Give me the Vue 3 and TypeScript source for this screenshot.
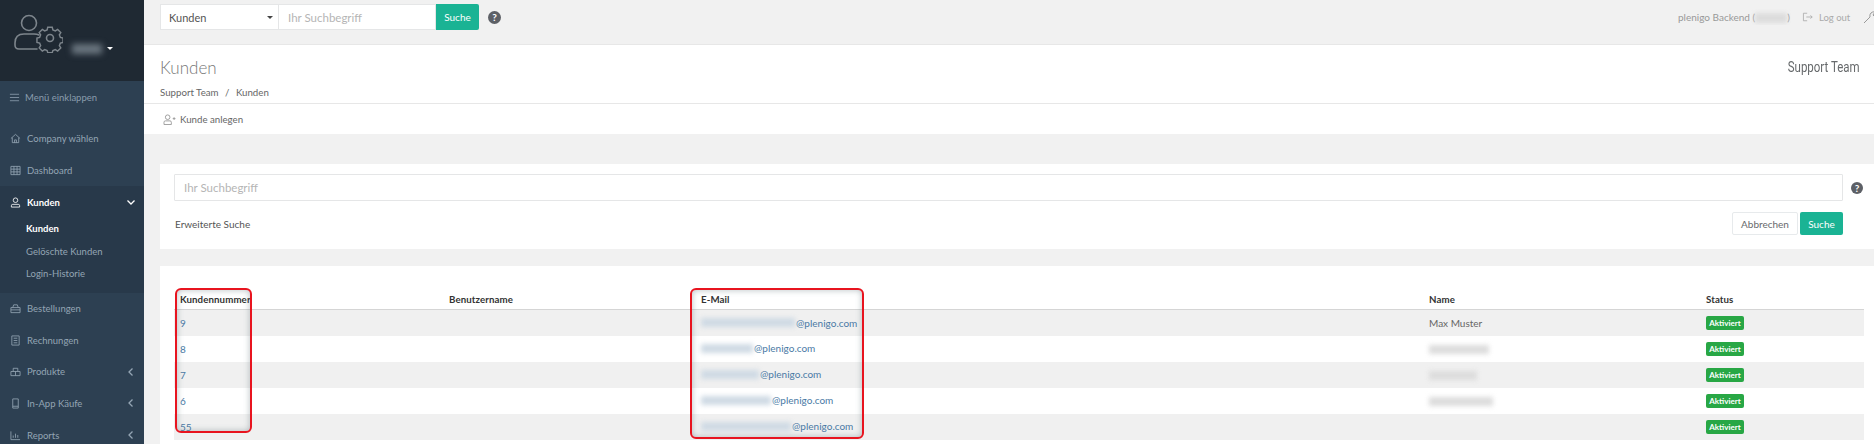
<template>
  <div class="page">
    <aside class="sidebar">
      <div class="profile">
        <svg class="avatar" viewBox="0 0 50 40" fill="none" stroke="#7d858c" stroke-width="1.6">
          <circle cx="16" cy="10" r="7.5" />
          <path d="M24 36H6q-4 0-4-4v-2q0-9 9-9h10q3 0 5 1" stroke-linecap="round" />
          <circle cx="37" cy="25" r="3.5" />
          <path d="M34.500 13h5l.7 3 2.700 1.100 2.600-1.600 3.500 3.500-1.600 2.600 1.100 2.700 3 .7v5l-3 .7-1.100 2.700 1.600 2.600-3.500 3.500-2.600-1.600-2.700 1.100-.7 2.300h-5l-.7-2.300-2.700-1.100-2.600 1.600-3.500-3.500 1.600-2.600-1.100-2.700-3-.7v-5l3-.7 1.100-2.700-1.600-2.600 3.500-3.500 2.600 1.600 2.700-1.100z" transform="translate(3.700 2.500) scale(.9)" />
        </svg>
        <span class="profile-name"></span>
        <span class="caret-white"></span>
      </div>

      <div class="collapse-row">
        <svg class="nav-icon" viewBox="0 0 12 12" stroke="currentColor" fill="none"><path d="M1 2.500h10M1 6h10M1 9.500h10" /></svg>
        <span>Menü einklappen</span>
      </div>

      <nav class="nav">
        <template v-for="item in navItems" :key="item.label">
          <div class="nav-item" :class="{ active: item.active }">
            <svg class="nav-icon" viewBox="0 0 12 12" stroke="currentColor" fill="none" v-html="item.icon"></svg>
            <span class="nav-label">{{ item.label }}</span>
            <svg v-if="item.arrow" class="nav-arrow" viewBox="0 0 10 10" stroke="currentColor" fill="none" stroke-width="1.300">
              <path :d="item.arrow === 'down' ? 'M1.500 3.500 5 7l3.500-3.500' : 'M6.500 1.500 3 5l3.500 3.500'" />
            </svg>
          </div>
          <div v-if="item.active" class="subnav">
            <div v-for="(sub, i) in subItems" :key="sub" class="subnav-item" :class="{ current: i === 0 }">{{ sub }}</div>
          </div>
        </template>
      </nav>
    </aside>

    <main class="main">
      <header class="topbar">
        <div class="quick-search">
          <div class="qs-select"><span>Kunden</span><i class="caret-dark"></i></div>
          <div class="qs-input">Ihr Suchbegriff</div>
          <button class="btn-teal qs-btn">Suche</button>
        </div>
        <span class="help">?</span>
        <div class="top-right">
          <span class="backend">plenigo Backend (<i class="blur-light"></i>)</span>
          <span class="logout">
            <svg viewBox="0 0 14 12" width="12" height="10" fill="none" stroke="currentColor"><path d="M6 1.500H1.500v9H6M5 6h7M10 4l2 2-2 2" /></svg>
            Log out
          </span>
          <svg class="wrench" viewBox="0 0 16 16" width="16" height="16" fill="none" stroke="#999"><path d="M2 14l6-6a4 4 0 0 1 5-5l-2 3 2 2 3-2" /></svg>
        </div>
      </header>

      <section class="title-block">
        <div>
          <h1>Kunden</h1>
          <div class="crumbs">Support Team <em>/</em> Kunden</div>
        </div>
        <div class="team">Support Team</div>
      </section>

      <section class="actions">
        <svg viewBox="0 0 14 12" width="13" height="11" fill="none" stroke="#999"><circle cx="5" cy="3.500" r="2.500" /><path d="M1 11.500V9q0-1.500 1.500-1.500h5Q9 7.500 9 9v2.500zM10.500 5h3M12 3.500v3" /></svg>
        <span>Kunde anlegen</span>
      </section>

      <section class="card search-card">
        <div class="search-row">
          <div class="search-input">Ihr Suchbegriff</div>
          <span class="help small">?</span>
        </div>
        <div class="search-foot">
          <span>Erweiterte Suche</span>
          <div class="search-buttons">
            <button class="btn-plain">Abbrechen</button>
            <button class="btn-teal">Suche</button>
          </div>
        </div>
      </section>

      <section class="card table-card">
        <div class="table-wrap">
          <table>
            <colgroup>
              <col style="width: 269px" />
              <col style="width: 252px" />
              <col style="width: 728px" />
              <col style="width: 277px" />
              <col style="width: 164px" />
            </colgroup>
            <thead>
              <tr>
                <th>Kundennummer</th>
                <th>Benutzername</th>
                <th>E-Mail</th>
                <th>Name</th>
                <th>Status</th>
              </tr>
            </thead>
            <tbody>
              <tr v-for="row in rows" :key="row.id">
                <td><a>{{ row.id }}</a></td>
                <td></td>
                <td>
                  <a class="mail"><i class="blur-blue" :style="{ width: row.mailBlur + 'px' }"></i>@plenigo.com</a>
                </td>
                <td>
                  <template v-if="row.name">{{ row.name }}</template>
                  <i v-else-if="row.nameBlur" class="blur-gray" :style="{ width: row.nameBlur + 'px' }"></i>
                </td>
                <td><span class="badge">Aktiviert</span></td>
              </tr>
            </tbody>
          </table>
          <div class="mark mark-id"></div>
          <div class="mark mark-mail"></div>
        </div>
      </section>
    </main>
  </div>
</template>

<script setup lang="ts">
interface NavItem {
  label: string
  icon: string
  arrow?: 'down' | 'left'
  active?: boolean
}

const navItems: NavItem[] = [
  { label: 'Company wählen', icon: '<path d="M1 6l5-4.500L11 6M2.500 5v5.500h7V5M5 10.500V7.500h2v3"/>' },
  { label: 'Dashboard', icon: '<path d="M1 1.500h10v9H1zM1 4.500h10M1 7.500h10M4.300 1.500v9M7.700 1.500v9"/>' },
  { label: 'Kunden', icon: '<circle cx="6" cy="3.500" r="2.500"/><path d="M1.500 11V9.500Q1.500 8 3 8h6q1.500 0 1.500 1.500V11z"/>', arrow: 'down', active: true },
  { label: 'Bestellungen', icon: '<path d="M1 5h10v5.500H1zM3 5l1-3h4l1 3M1 7.500h10"/>' },
  { label: 'Rechnungen', icon: '<path d="M2 1h8v10H2zM4 3.500h4M4 6h4M4 8.500h4"/>' },
  { label: 'Produkte', icon: '<path d="M1 6h10v4.500H1zM3.500 6V2.500h5V6M6 6v4.500"/>', arrow: 'left' },
  { label: 'In-App Käufe', icon: '<path d="M3 1h6v10H3zM3 9h6"/>', arrow: 'left' },
  { label: 'Reports', icon: '<path d="M1 1.500v9h10M3.500 8.500V6M6 8.500V4M8.500 8.500V5.500"/>', arrow: 'left' }
]

const subItems = ['Kunden', 'Gelöschte Kunden', 'Login-Historie']

const rows = [
  { id: '9', mailBlur: 94, name: 'Max Muster', nameBlur: 0 },
  { id: '8', mailBlur: 52, name: '', nameBlur: 60 },
  { id: '7', mailBlur: 58, name: '', nameBlur: 48 },
  { id: '6', mailBlur: 70, name: '', nameBlur: 64 },
  { id: '55', mailBlur: 90, name: '', nameBlur: 0 }
]
</script>

<style>
html, body { margin: 0; overflow: hidden; background: #f1f1f1; }
</style>

<style scoped>
.page {
  display: flex;
  width: 1874px;
  height: 444px;
  overflow: hidden;
  font-family: "Lato", "Open Sans", sans-serif;
  font-size: 10px;
  color: #666;
}

.sidebar {
  flex: 0 0 144px;
  background: #2d4052;
  color: #94a5b4;
  overflow: hidden;
  font-size: 9.5px;
}

.profile {
  height: 81px;
  background: #1f2933;
  position: relative;
  box-sizing: border-box;
}
.avatar { position: absolute; left: 13px; top: 13px; width: 50px; height: 40px; }
.profile-name {
  position: absolute;
  left: 72px;
  top: 44px;
  width: 30px;
  height: 10px;
  background: #6b7680;
  filter: blur(3px);
}
.caret-white {
  position: absolute;
  left: 107px;
  top: 47px;
  border: 3px solid transparent;
  border-top-color: #fff;
}

.collapse-row {
  display: flex;
  align-items: center;
  gap: 5px;
  height: 32px;
  padding-left: 9px;
  margin-bottom: 10px;
  color: #8a9cad;
}
.nav-icon { width: 11px; height: 11px; flex: none; stroke-width: 0.9; }

.nav-item {
  display: flex;
  align-items: center;
  gap: 6px;
  height: 31.7px;
  padding: 0 8px 0 10px;
}
.nav-item.active { background: #28394a; color: #fff; font-weight: 700; }
.nav-label { flex: 1; }
.nav-arrow { width: 10px; height: 10px; flex: none; }

.subnav { background: #28394a; padding: 0 0 0 26px; height: 74.5px; }
.subnav-item { height: 22.5px; line-height: 22.5px; }
.subnav-item.current { color: #fff; font-weight: 700; }

.main { flex: 1; min-width: 0; display: flex; flex-direction: column; }

.topbar {
  display: flex;
  align-items: center;
  flex: none;
  height: 45px;
  padding: 0 0 10px 16px;
  box-sizing: border-box;
  border-bottom: 1px solid #e7e7e7;
  background: #f1f1f1;
}
.quick-search { display: flex; height: 26px; }
.qs-select {
  display: flex;
  align-items: center;
  justify-content: space-between;
  width: 119px;
  padding: 0 5px 0 8px;
  box-sizing: border-box;
  background: #fff;
  border: 1px solid #e5e6e7;
  font-size: 11px;
  color: #555;
}
.qs-input {
  display: flex;
  align-items: center;
  width: 157px;
  padding-left: 9px;
  box-sizing: border-box;
  background: #fff;
  border: 1px solid #e5e6e7;
  border-left: 0;
  color: #b5b5b5;
  font-size: 11.5px;
}
.caret-dark { border: 3px solid transparent; border-top-color: #444; margin-top: 3px; }

.btn-teal {
  background: #1ab394;
  color: #fff;
  border: 0;
  border-radius: 2px;
  font: inherit;
  width: 43px;
  height: 23px;
  padding: 0;
}
.qs-btn { height: 26px; border-radius: 0 2px 2px 0; }

.help {
  display: inline-flex;
  align-items: center;
  justify-content: center;
  width: 13px;
  height: 13px;
  margin-left: 9px;
  border-radius: 50%;
  background: #5d6066;
  color: #fff;
  font-size: 10px;
  font-weight: 700;
}
.help.small { width: 12px; height: 12px; margin-left: 8px; margin-right: 11px; }

.top-right {
  margin-left: auto;
  display: flex;
  align-items: center;
  gap: 12px;
  color: #999;
  width: 196px;
  flex: none;
  overflow: hidden;
  white-space: nowrap;
}
.backend { flex: none; }
.logout { display: inline-flex; align-items: center; gap: 5px; color: #aaa; flex: none; font-size: 9.5px; }
.wrench { flex: none; }
.blur-light {
  display: inline-block;
  width: 32px;
  height: 10px;
  background: #dcdcdc;
  filter: blur(2px);
  vertical-align: middle;
}

.title-block {
  display: flex;
  justify-content: space-between;
  flex: none;
  height: 59px;
  padding: 11px 14px 0 16px;
  box-sizing: border-box;
  background: #fff;
  border-bottom: 1px solid #e7e7e7;
}
h1 { margin: 0; font-size: 17px; font-weight: 300; color: #777; line-height: 24px; }
.crumbs { margin-top: 6px; font-size: 9.7px; color: #666; }
.crumbs em { margin: 0 4px; font-style: normal; }
.team {
  padding-top: 3px;
  font-family: "Roboto", sans-serif;
  font-size: 14px;
  color: #676a6c;
  transform: scaleX(0.82);
  transform-origin: right top;
}

.actions {
  display: flex;
  align-items: center;
  flex: none;
  gap: 4px;
  height: 30px;
  padding-left: 19px;
  background: #fff;
  font-size: 9.7px;
}

.card { background: #fff; margin-left: 16px; }

.search-card {
  flex: none;
  height: 85px;
  margin-top: 30px;
  padding: 10px 0 0 14px;
  box-sizing: border-box;
}
.search-row { display: flex; align-items: center; }
.search-input {
  flex: 1;
  height: 27px;
  display: flex;
  align-items: center;
  padding-left: 9px;
  box-sizing: border-box;
  border: 1px solid #e5e6e7;
  border-radius: 1px;
  color: #b5b5b5;
  font-size: 11.5px;
}
.search-foot {
  display: flex;
  align-items: center;
  justify-content: space-between;
  margin-top: 11px;
  padding-right: 31px;
}
.search-foot > span { padding-left: 1px; color: #555; }
.search-buttons { display: flex; gap: 2px; }
.btn-plain {
  width: 66px;
  height: 23px;
  background: #fff;
  border: 1px solid #e7eaec;
  border-radius: 2px;
  font: inherit;
  color: #676a6c;
  padding: 0;
}

.table-card {
  flex: 1;
  margin-top: 17px;
  padding: 22px 0 0 14px;
}
.table-wrap { position: relative; width: 1690px; }
table { width: 1690px; border-collapse: collapse; table-layout: fixed; }
th {
  height: 21px;
  padding: 0 6px;
  text-align: left;
  font-size: 9.7px;
  font-weight: 700;
  letter-spacing: 0.1px;
  color: #333;
  border-bottom: 1px solid #d5d5d5;
}
td { height: 26px; padding: 0 6px; box-sizing: border-box; }
tbody tr:nth-child(odd) td { background: #f0f0f0; }
a { color: #4a7aa5; }
.mail { display: inline-flex; align-items: center; }
.blur-blue {
  display: inline-block;
  height: 9px;
  margin-right: 1px;
  background: #cfdae4;
  filter: blur(2.500px);
}
.blur-gray {
  display: inline-block;
  height: 9px;
  background: #dcdcdc;
  filter: blur(2.500px);
  vertical-align: middle;
}
.badge {
  display: inline-block;
  width: 38px;
  height: 14px;
  line-height: 14px;
  text-align: center;
  border-radius: 2px;
  background: #28a745;
  color: #fff;
  font-size: 8px;
  font-weight: 700;
}

.mark {
  position: absolute;
  top: 0;
  box-sizing: border-box;
  border: 2px solid #e8141f;
  border-radius: 6px;
  box-shadow: inset 0 0 6px rgba(90, 110, 120, 0.45);
}
.mark-id { left: 1px; width: 77px; height: 145px; }
.mark-mail { left: 516px; width: 174px; height: 151px; }
</style>
